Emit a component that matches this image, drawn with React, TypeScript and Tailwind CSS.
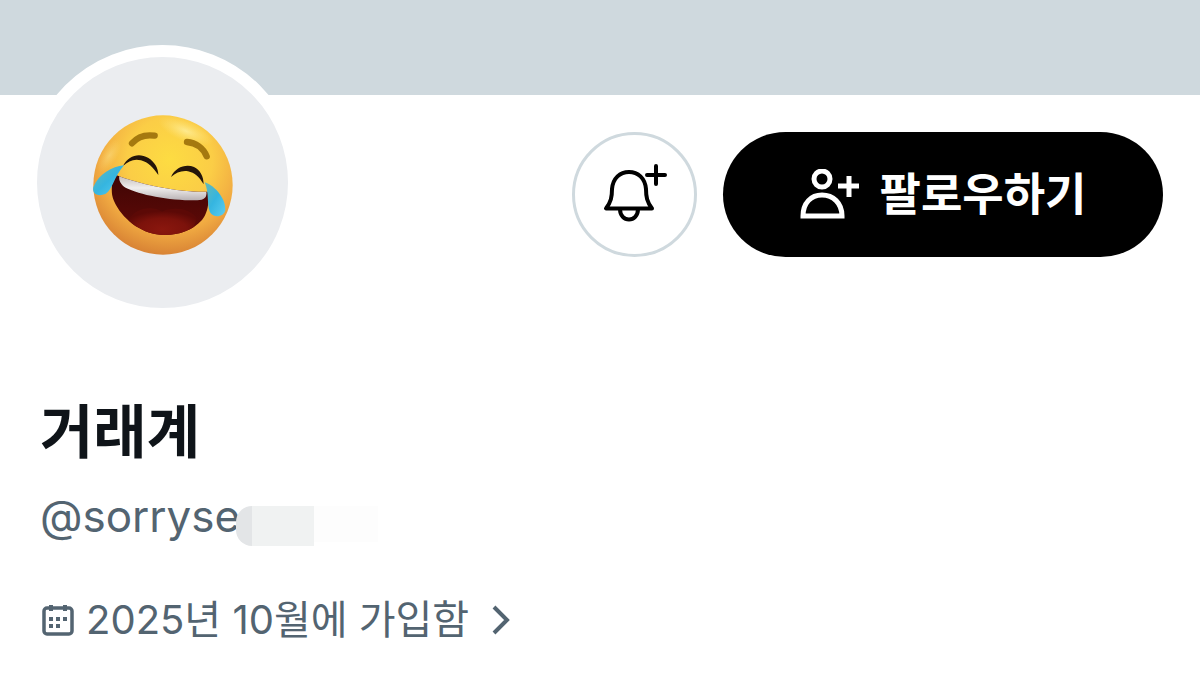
function LaughingFace() {
  return (
    <svg viewBox="0 0 495 480" className="w-[165px] h-[160px]" aria-hidden="true">
      <defs>
        <radialGradient id="face" cx="0.55" cy="0.32" r="0.68">
          <stop offset="0" stopColor="#fddc42" />
          <stop offset="0.45" stopColor="#fbcd46" />
          <stop offset="0.75" stopColor="#f1ab42" />
          <stop offset="1" stopColor="#d98435" />
        </radialGradient>
        <radialGradient id="shine" cx="0.5" cy="0.5" r="0.5">
          <stop offset="0" stopColor="#fff0a0" stopOpacity="0.8" />
          <stop offset="1" stopColor="#ffe680" stopOpacity="0" />
        </radialGradient>
        <radialGradient id="tongue" cx="0.5" cy="0.7" r="0.6">
          <stop offset="0" stopColor="#8a170e" />
          <stop offset="0.6" stopColor="#7c120b" />
          <stop offset="1" stopColor="#5c0906" />
        </radialGradient>
        <linearGradient id="mouth" x1="0" y1="0" x2="0" y2="1">
          <stop offset="0" stopColor="#3d0504" />
          <stop offset="0.55" stopColor="#520806" />
          <stop offset="1" stopColor="#640a07" />
        </linearGradient>
        <linearGradient id="teeth" x1="0" y1="0" x2="0" y2="1">
          <stop offset="0" stopColor="#c4bdb9" />
          <stop offset="0.5" stopColor="#f0eeee" />
          <stop offset="1" stopColor="#b8b1b3" />
        </linearGradient>
        <linearGradient id="tear" x1="0" y1="0" x2="1" y2="1">
          <stop offset="0" stopColor="#67b9b4" />
          <stop offset="0.5" stopColor="#35b5e0" />
          <stop offset="1" stopColor="#5bcdf0" />
        </linearGradient>
        <clipPath id="mouthClip">
          <path d="M106 209C180 238 290 262 384 260C388 290 384 322 366 345C335 380 286 393 240 389C180 384 125 340 102 288C91 262 93 232 106 209Z" />
        </clipPath>
      </defs>
      <circle cx="249" cy="240" r="209" fill="url(#face)" />
      <ellipse cx="318" cy="78" rx="88" ry="32" transform="rotate(22 318 78)" fill="url(#shine)" />
      <ellipse cx="88" cy="152" rx="24" ry="58" transform="rotate(32 88 152)" fill="url(#shine)" opacity="0.5" />
      <g fill="none" stroke="#a5790f" strokeWidth="19" strokeLinecap="round">
        <path d="M156 115C171 97 196 88 224 92" />
        <path d="M321 111C347 113 370 129 380 154" />
      </g>
      <path d="M129 183C145 150 178 143 204 158C224 170 235 189 235 210C219 187 205 172 183 166C163 160 145 168 129 183Z" fill="#24150a" />
      <path d="M273 216C286 187 317 176 342 186C360 194 371 214 371 238C358 216 344 203 324 199C305 196 288 203 273 216Z" fill="#24150a" />
      <g clipPath="url(#mouthClip)">
        <rect x="85" y="200" width="310" height="200" fill="url(#mouth)" />
        <path d="M145 345C165 309 215 300 246 320C280 304 330 310 350 340L330 400H160Z" fill="url(#tongue)" />
        <path d="M118 212C200 240 290 260 379 259C382 278 372 286 352 286C270 287 180 270 137 248C124 240 115 226 118 212Z" fill="url(#teeth)" />
      </g>
      <path d="M132 181C96 184 56 208 40 246C35 267 54 276 76 267C99 254 101 216 132 181Z" fill="url(#tear)" />
      <path d="M374 232C407 243 438 283 436 315C432 337 401 340 390 322C380 296 388 264 374 232Z" fill="url(#tear)" />
    </svg>
  );
}

function BellPlusIcon() {
  return (
    <svg viewBox="0 0 64 60" className="w-16 h-[60px] overflow-visible" fill="none" stroke="currentColor" strokeWidth="4" strokeLinecap="round" strokeLinejoin="round" aria-hidden="true">
      <path d="M3 43.500H49C44 37 43 32 43 24C42 13 35 7 26 7S10 13 9 24C9 32 8 37 3 43.500Z" />
      <path d="M17 44C17 58 35 58 35 44M53 1V19M44 10H62" />
    </svg>
  );
}

function UserPlusIcon() {
  return (
    <svg viewBox="0 0 60 52" className="w-[60px] h-[52px]" fill="none" stroke="currentColor" strokeWidth="5" aria-hidden="true">
      <circle cx="23" cy="10" r="8" />
      <path d="M4 47C4 34 12 26 23 26S43 34 43 47Z" />
      <path d="M50 7V28M39 17H60" />
    </svg>
  );
}

function CalendarIcon() {
  return (
    <svg viewBox="0 0 32 32" className="w-8 h-8" fill="none" stroke="currentColor" strokeWidth="3.5" aria-hidden="true">
      <rect x="2" y="4" width="28" height="26" rx="3" />
      <path d="M9 1V7M23 1V7" strokeWidth="4" />
      <path d="M7 15H11M14 15H18M21 15H25M7 22H11M14 22H18" strokeWidth="4" />
    </svg>
  );
}

export default function App() {
  return (
    <main className="w-full min-h-screen bg-white text-[#536471] font-['Inter','Noto_Sans_CJK_KR',sans-serif]">
      <div className="h-[95px] bg-[#cfd9de]" />
      <header className="flex items-start justify-between pl-[25px] pr-[37px]">
        <div className="-mt-[50px] flex items-center justify-center w-[275px] h-[275px] pt-1 shrink-0 rounded-full border-12 border-white bg-[#ebedf0]">
          <LaughingFace />
        </div>
        <div className="flex items-center gap-[26px] pt-[37px]">
          <button type="button" aria-label="알림" className="flex items-center justify-center w-[125px] h-[125px] rounded-full border-3 border-[#cfd9de] text-black">
            <BellPlusIcon />
          </button>
          <button type="button" className="flex items-center justify-center gap-5 w-[440px] h-[125px] rounded-full bg-black text-white text-[45px] leading-[60px] font-bold">
            <UserPlusIcon />
            팔로우하기
          </button>
        </div>
      </header>
      <section className="px-10 pt-20">
        <h1 className="text-[58px] leading-[64px] font-bold text-[#0f1419]">거래계</h1>
        <div className="flex items-center pt-[22px]">
          <span className="text-[44px] leading-[60px]">@sorryse</span>
          <span className="flex items-start h-10 -ml-1 mt-5">
            <span className="w-4 h-10 rounded-l-full bg-[#e3e5e7]" />
            <span className="w-[62px] h-10 bg-[#f0f2f2]" />
            <span className="w-16 h-9 bg-[#fdfdfd]" />
          </span>
        </div>
        <a href="#joined" className="flex items-center w-fit pt-11 pl-0.5 text-[40px] leading-[60px]">
          <CalendarIcon />
          <span className="pl-3 pr-[22px]">2025년 10월에 가입함</span>
          <svg viewBox="0 0 20 32" className="w-5 h-8" fill="none" stroke="currentColor" strokeWidth="4" aria-hidden="true">
            <path d="M3 3L16 16L3 29" />
          </svg>
        </a>
      </section>
    </main>
  );
}
